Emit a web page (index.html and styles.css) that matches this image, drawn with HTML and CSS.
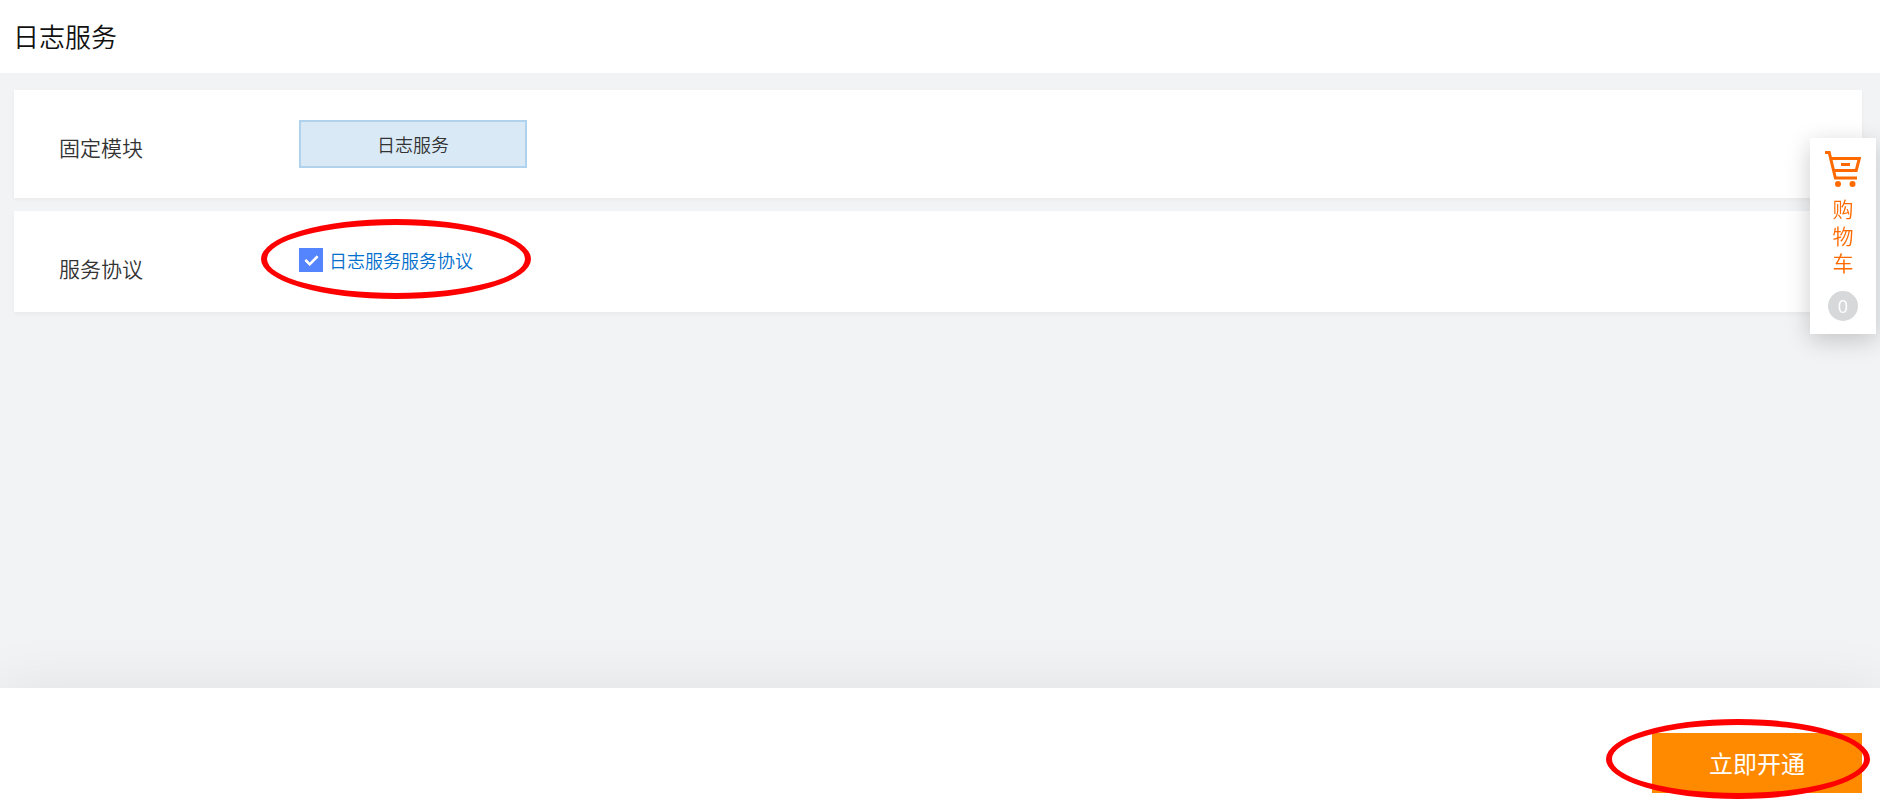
FILE: index.html
```
<!DOCTYPE html>
<html lang="zh-CN">
<head>
    <meta charset="UTF-8">
    <meta name="viewport" content="width=device-width, initial-scale=1.0">
    <title>日志服务</title>
    <link rel="stylesheet" href="styles.css">
</head>
<body>
    <header class="header">
        <h1>日志服务</h1>
    </header>

    <main class="content">
        <section class="card">
            <h2 class="card-label">固定模块</h2>
            <button type="button" class="module">日志服务</button>
        </section>
        <section class="card card-agreement">
            <h2 class="card-label">服务协议</h2>
            <div class="agreement">
                <input type="checkbox" id="agree" class="checkbox" checked>
                <label for="agree"><a href="#">日志服务服务协议</a></label>
                <span class="mark mark-agreement"></span>
            </div>
        </section>
    </main>

    <footer class="footer">
        <div class="submit-wrap">
            <button type="button" class="submit">立即开通</button>
            <span class="mark mark-submit"></span>
        </div>
    </footer>

    <a href="#" class="cart">
        <svg class="cart-icon" width="36" height="36" viewBox="0 0 36 36" fill="none" stroke="#ff6a00" stroke-width="3">
            <path d="M0 1.5H4.2L10.4 27H32"/>
            <path d="M5.5 7.5H34.3L31.2 19.5H8.5"/>
            <path d="M16 13.5H25"/>
            <circle cx="13" cy="33" r="3" fill="#ff6a00" stroke="none"/>
            <circle cx="27.5" cy="33" r="3" fill="#ff6a00" stroke="none"/>
        </svg>
        <span class="cart-text">购物车</span>
        <span class="cart-count">0</span>
    </a>
</body>
</html>
```
FILE: styles.css
```
*, *::after {
    box-sizing: border-box;
}
body {
    margin: 0;
    min-height: 100vh;
    display: flex;
    flex-direction: column;
    background-color: #f1f3f5;
    color: #333;
    font-family: "Noto Sans CJK SC", sans-serif;
    font-weight: 350;
}
h1, h2 {
    margin: 0;
    font-weight: 350;
}
a {
    text-decoration: none;
}
button {
    font-family: inherit;
    font-weight: inherit;
    padding: 0;
    cursor: pointer;
}
.header {
    padding: 17px 13px 18px;
    background-color: #fff;
}
.header h1 {
    font-size: 26px;
    line-height: 38px;
    color: #111;
}
.content {
    flex: 1;
    display: flex;
    flex-direction: column;
    gap: 13px;
    padding: 17px 18px 17px 14px;
}
.card {
    display: flex;
    align-items: flex-start;
    padding: 30px 45px;
    background-color: #fff;
    box-shadow: 0 2px 4px rgba(0, 0, 0, 0.04);
}
.card-label {
    width: 240px;
    padding-top: 11px;
    font-size: 21px;
    line-height: 32px;
}
.module {
    width: 228px;
    height: 48px;
    border: 2px solid #b0d2ec;
    background-color: #d9eaf6;
    color: #333;
    font-size: 18px;
}
.agreement {
    position: relative;
    display: flex;
    align-items: center;
    gap: 6px;
    height: 38px;
    font-size: 18px;
    line-height: 24px;
}
.card-agreement {
    padding-bottom: 28px;
}
.agreement a {
    color: #006fcd;
}
.checkbox {
    appearance: none;
    display: grid;
    place-items: center;
    width: 24px;
    height: 24px;
    margin: 0;
    background-color: #5584ff;
}
.checkbox:checked::after {
    content: "";
    width: 13px;
    height: 8px;
    margin-bottom: 3px;
    border: solid #fff;
    border-width: 0 0 3px 3px;
    border-radius: 1px;
    transform: rotate(-45deg);
}
/* red ellipses around the two steps */
.mark {
    position: absolute;
    border: 6px solid #f00;
    border-radius: 50%;
    pointer-events: none;
}
.mark-agreement {
    left: -38px;
    top: -22px;
    width: 270px;
    height: 80px;
}
.mark-submit {
    right: -8px;
    top: -14px;
    width: 264px;
    height: 80px;
}
.footer {
    display: flex;
    justify-content: flex-end;
    padding: 45px 18px 18px;
    background-color: #fff;
    box-shadow: 0 0 60px rgba(0, 0, 0, 0.08);
}
.submit-wrap {
    position: relative;
}
.submit {
    display: block;
    width: 210px;
    height: 60px;
    padding-bottom: 2px;
    border: none;
    background-color: #ff8a00;
    color: #fff;
    font-size: 24px;
    font-weight: 400;
}
.cart {
    position: fixed;
    top: 138px;
    right: 4px;
    width: 66px;
    display: flex;
    flex-direction: column;
    align-items: center;
    padding: 13px 0;
    background-color: #fff;
    color: #ff6a00;
    box-shadow: 0 6px 24px rgba(0, 0, 0, 0.2);
}
.cart-text {
    width: 21px;
    margin: 8px 0 15px;
    font-size: 21px;
    line-height: 27px;
}
.cart-count {
    width: 30px;
    height: 30px;
    border-radius: 50%;
    background-color: #d7d8d9;
    color: #fff;
    font-family: "Open Sans", sans-serif;
    font-size: 18px;
    font-weight: 400;
    line-height: 30px;
    text-align: center;
}
```
